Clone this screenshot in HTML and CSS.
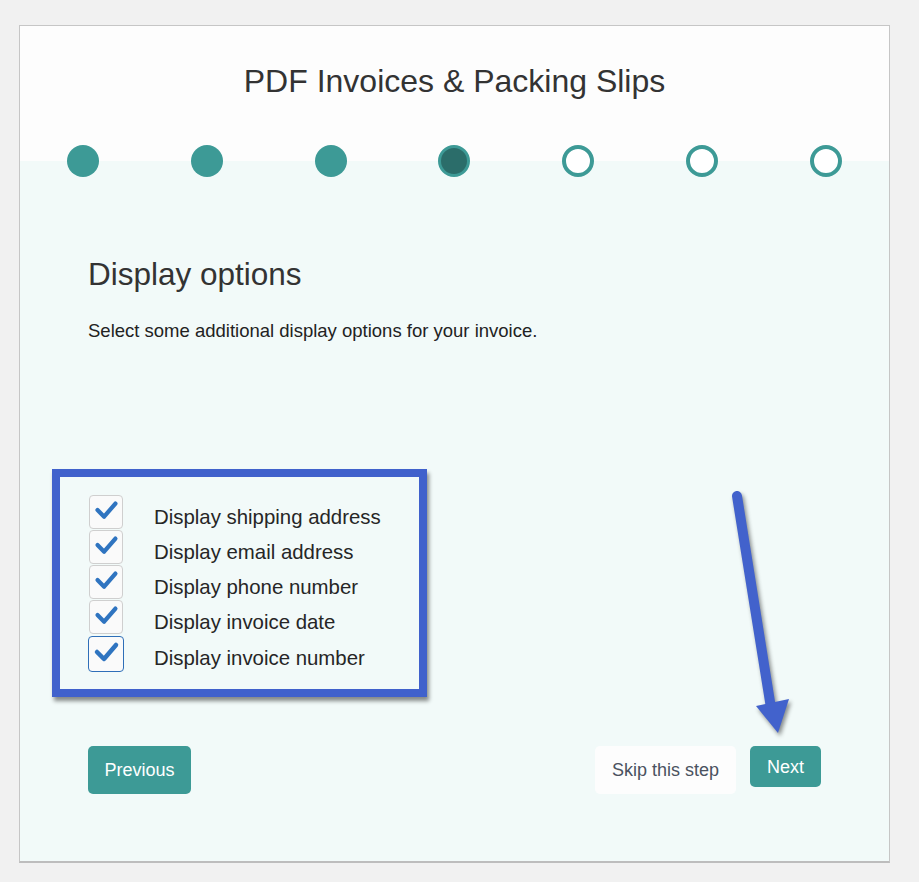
FILE: index.html
```html
<!DOCTYPE html>
<html>
<head>
<title>PDF Invoices &amp; Packing Slips - Setup</title>
<link rel="stylesheet" href="styles.css">
</head>
<body>

<div class="page">
  <div class="wizard">
    <div class="wizard-header">
      <h1 class="wizard-title">PDF Invoices &amp; Packing Slips</h1>
      <div class="steps">
        <span class="step done"></span>
        <span class="step done"></span>
        <span class="step done"></span>
        <span class="step active"></span>
        <span class="step"></span>
        <span class="step"></span>
        <span class="step"></span>
      </div>
    </div>

    <div class="wizard-body">
      <h2 class="step-title">Display options</h2>
      <p class="step-intro">Select some additional display options for your invoice.</p>

      <div class="options">
        <label class="option">
          <span class="checkbox"><svg viewBox="0 0 34 34"><path d="M8 15 L15 22 L27 8"/></svg></span>
          <span class="option-label">Display shipping address</span>
        </label>
        <label class="option">
          <span class="checkbox"><svg viewBox="0 0 34 34"><path d="M8 15 L15 22 L27 8"/></svg></span>
          <span class="option-label">Display email address</span>
        </label>
        <label class="option">
          <span class="checkbox"><svg viewBox="0 0 34 34"><path d="M8 15 L15 22 L27 8"/></svg></span>
          <span class="option-label">Display phone number</span>
        </label>
        <label class="option">
          <span class="checkbox"><svg viewBox="0 0 34 34"><path d="M8 15 L15 22 L27 8"/></svg></span>
          <span class="option-label">Display invoice date</span>
        </label>
        <label class="option">
          <span class="checkbox focused"><svg viewBox="0 0 34 34"><path d="M8 15 L15 22 L27 8"/></svg></span>
          <span class="option-label">Display invoice number</span>
        </label>
      </div>

      <div class="actions">
        <button class="btn btn-primary btn-prev">Previous</button>
        <div class="actions-right">
          <button class="btn btn-skip">Skip this step</button>
          <button class="btn btn-primary btn-next">Next</button>
        </div>
      </div>
    </div>
  </div>

  <!-- annotation arrow pointing at the Next button -->
  <svg class="arrow" viewBox="0 0 919 882">
    <line x1="737" y1="496" x2="771" y2="708"/>
    <polygon points="756,706 789,699 778,733"/>
  </svg>
</div>

</body>
</html>
```

FILE: styles.css
```css
body {
  margin: 0;
  background-color: #f1f1f1;
  font-family: "Liberation Sans", Arial, sans-serif;
  color: #333;
}

.page {
  position: relative;
  width: 919px;
  height: 882px;
  padding: 25px 29px 0 19px;
  box-sizing: border-box;
}

.wizard {
  background-color: #f2faf9;
  border: 1px solid #c6c6c6;
  border-bottom: 2px solid #bdbdbd;
  height: 838px;
  box-sizing: border-box;
}

.wizard-header {
  background-color: #fdfdfd;
  padding-top: 36px;
}

.wizard-title {
  margin: 0;
  font-size: 32px;
  line-height: 38px;
  font-weight: normal;
  text-align: center;
  color: #333;
}

.steps {
  display: flex;
  justify-content: space-between;
  padding: 0 47px;
  margin-top: 45px;
  background: linear-gradient(#fdfdfd 50%, #f2faf9 50%);
}

.step {
  width: 32px;
  height: 32px;
  border-radius: 50%;
  box-sizing: border-box;
  background-color: #fff;
  border: 4px solid #3d9a96;
}

.step.done {
  background-color: #3d9a96;
  border: none;
}

.step.active {
  background-color: #2b6d6a;
  border: 3px solid #3d9a96;
}

.wizard-body {
  padding: 78px 68px 0 68px;
}

.step-title {
  margin: 0;
  font-size: 31.5px;
  line-height: 38px;
  font-weight: normal;
  color: #333;
}

.step-intro {
  margin: 25px 0 0 0;
  font-size: 18.5px;
  line-height: 26px;
  color: #222;
}

/* highlighted option list */
.options {
  margin: 125px 0 0 -36px;
  width: 375px;
  height: 228px;
  box-sizing: border-box;
  border: 8px solid #4061cc;
  padding: 18px 0 0 29px;
  box-shadow: 2px 4px 4px rgba(0, 0, 0, 0.45);
  display: flex;
  flex-direction: column;
}

.option {
  display: flex;
  align-items: flex-start;
  height: 35px;
}

.option:last-child {
  margin-top: 1px;
}

.checkbox {
  width: 34px;
  height: 34px;
  box-sizing: border-box;
  border: 1px solid #cfcfcf;
  border-radius: 4px;
  background-color: #fafafa;
  flex-shrink: 0;
}

.checkbox.focused {
  border: 1.5px solid #2f6fb8;
  width: 36px;
  height: 36px;
  margin-left: -1px;
}

.checkbox svg {
  display: block;
  width: 100%;
  height: 100%;
}

.checkbox path {
  fill: none;
  stroke: #2f74c0;
  stroke-width: 4.5;
  stroke-linecap: round;
  stroke-linejoin: round;
}

.option-label {
  margin-left: 31px;
  padding-top: 10px;
  font-size: 20.4px;
  line-height: 24px;
  color: #262626;
}

.checkbox.focused + .option-label {
  margin-left: 30px;
}

.actions {
  display: flex;
  justify-content: space-between;
  align-items: flex-start;
  margin-top: 49px;
}

.actions-right {
  display: flex;
  align-items: flex-start;
  gap: 14px;
}

.btn {
  font-family: "Liberation Sans", Arial, sans-serif;
  font-size: 18px;
  line-height: 20px;
  border: none;
  border-radius: 5px;
  cursor: pointer;
}

.btn-primary {
  background-color: #3d9a96;
  color: #fff;
}

.btn-prev {
  width: 103px;
  height: 48px;
}

.btn-skip {
  width: 141px;
  height: 48px;
  background-color: #fdfdfd;
  color: #4a5260;
}

.btn-next {
  width: 71px;
  height: 41px;
}

.arrow {
  position: absolute;
  left: 0;
  top: 0;
  width: 919px;
  height: 882px;
  pointer-events: none;
  filter: drop-shadow(2px 3px 2px rgba(0, 0, 0, 0.45));
}

.arrow line {
  stroke: #4262cc;
  stroke-width: 10;
  stroke-linecap: round;
}

.arrow polygon {
  fill: #4262cc;
}
```
